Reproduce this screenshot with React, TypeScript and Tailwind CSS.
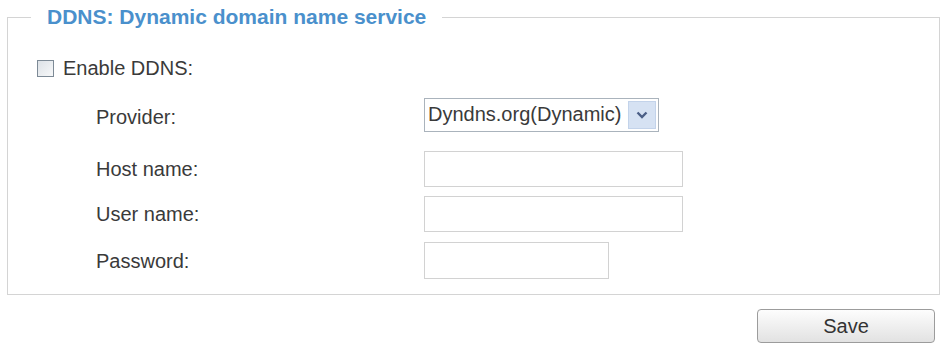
import React from "react";

export default function App() {
  return (
    <div className="w-[945px] h-[345px] bg-white font-['Liberation_Sans',Arial,sans-serif] text-[20px] text-[#3a3a3a] overflow-hidden">
      <fieldset className="ml-[7px] mt-[6px] w-[933px] border border-[#d4d4d4] pb-[15px]">
        <legend className="ml-[23px] px-[16px] text-[21px] leading-[22px] font-bold text-[#4a90cc]">
          DDNS: Dynamic domain name service
        </legend>
        <div className="mt-[22px] ml-[29px] h-[36px] flex items-center">
          <span className="w-[17px] h-[17px] border border-[#7d8a96] bg-gradient-to-br from-[#dde2e7] to-[#f7f8f9]" />
          <span className="ml-[9px] leading-none">Enable DDNS:</span>
        </div>
        <div className="ml-[88px] flex flex-col">
          <div className="mt-[12px] h-[34px] flex items-center">
            <span className="w-[328px] pt-[3px]">Provider:</span>
            <div className="w-[235px] h-[34px] border border-[#aab3bc] flex items-center justify-between pl-[3px] pr-[2px]">
              <span className="leading-none pb-[3px]">Dyndns.org(Dynamic)</span>
              <span className="w-[28px] h-[28px] bg-[#d6e2f3] border border-[#c3d3ea] flex items-center justify-center">
                <svg width="12" height="8" viewBox="0 0 12 8">
                  <path d="M1.5 1.5 L6 6 L10.5 1.5" fill="none" stroke="#4b5f86" strokeWidth="2.4" />
                </svg>
              </span>
            </div>
          </div>
          <div className="mt-[19px] h-[36px] flex items-center">
            <span className="w-[328px]">Host name:</span>
            <div className="w-[259px] h-[36px] border border-[#d2d2d2]" />
          </div>
          <div className="mt-[9px] h-[36px] flex items-center">
            <span className="w-[328px]">User name:</span>
            <div className="w-[259px] h-[36px] border border-[#d2d2d2]" />
          </div>
          <div className="mt-[10px] h-[37px] flex items-center">
            <span className="w-[328px]">Password:</span>
            <div className="w-[185px] h-[37px] border border-[#d2d2d2]" />
          </div>
        </div>
      </fieldset>
      <div className="mt-[14px] flex justify-end pr-[10px]">
        <button className="w-[178px] h-[34px] rounded-[4px] border border-[#9c9c9c] bg-gradient-to-b from-[#fdfdfd] to-[#e2e2e2] text-[20px] text-[#333]">
          Save
        </button>
      </div>
    </div>
  );
}
